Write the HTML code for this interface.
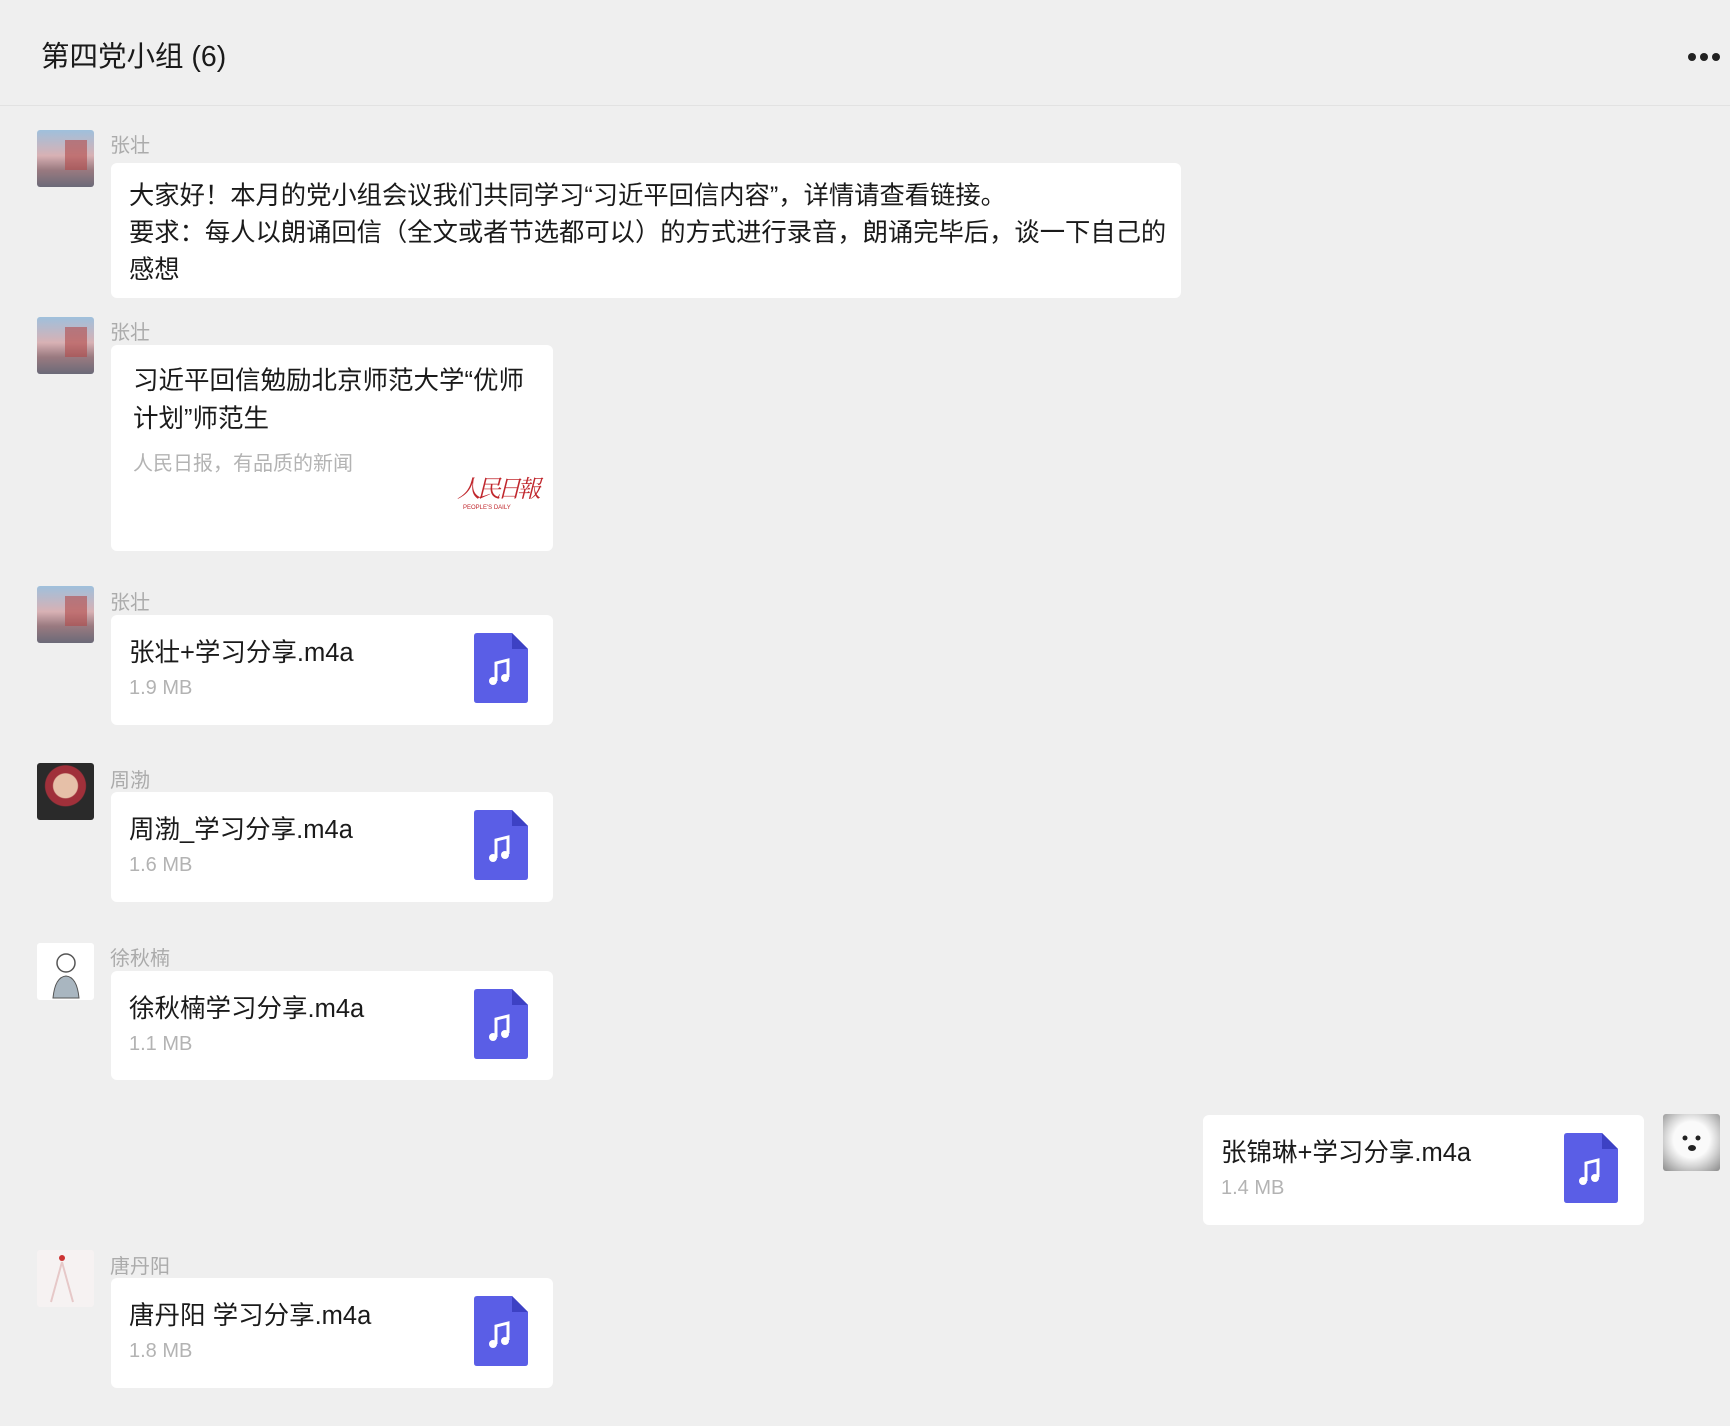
<!DOCTYPE html>
<html><head><meta charset="utf-8"><style>
*{margin:0;padding:0;box-sizing:border-box}
body{width:1730px;height:1426px;background:#efefef;font-family:"Liberation Sans","Noto Sans CJK SC",sans-serif;position:relative;overflow:hidden;color:#1a1a1a}
.hdr{position:absolute;left:0;top:0;width:1730px;height:106px;border-bottom:1px solid #e2e2e2}
.title{position:absolute;left:41px;top:34px;font-size:28.5px}
.dots{position:absolute;left:1688px;top:48px}
.dots i{display:inline-block;width:8px;height:8px;border-radius:50%;background:#222;margin-right:4px}
.av{position:absolute;left:37px;width:57px;height:57px;border-radius:3px;overflow:hidden}
.a1{background:linear-gradient(180deg,#9fc0dc 0%,#d8b1b4 45%,#9a7a80 70%,#6b6a78 100%)}
.a1:after{content:"";position:absolute;left:28px;top:10px;width:22px;height:30px;background:#b04a4a;opacity:.6}
.name{position:absolute;left:110px;font-size:20px;color:#ababab}
.b{position:absolute;background:#fff;border-radius:6px}
.txt{position:absolute;left:129px;font-size:25.3px;line-height:37px;white-space:nowrap}
.fn{position:absolute;left:18px;top:17px;font-size:25.5px;white-space:nowrap}
.sz{position:absolute;left:18px;top:62px;font-size:20px;color:#b3b3b3}
.ic{position:absolute;width:54px;height:70px}
</style></head><body>
<div class="hdr"><div class="title">第四党小组 (6)</div><div class="dots"><i></i><i></i><i></i></div></div>

<div class="av a1" style="top:130px"></div>
<div class="name" style="top:129px">张壮</div>
<div class="b" style="left:111px;top:163px;width:1070px;height:135px"></div>
<div class="txt" style="top:178px">大家好！本月的党小组会议我们共同学习“习近平回信内容”，详情请查看链接。<br>要求：每人以朗诵回信（全文或者节选都可以）的方式进行录音，朗诵完毕后，谈一下自己的<br>感想</div>

<div class="av a1" style="top:317px"></div>
<div class="name" style="top:316px">张壮</div>
<div class="b" style="left:111px;top:345px;width:442px;height:206px">
<div style="position:absolute;left:22px;top:17px;font-size:25.5px;line-height:38px">习近平回信勉励北京师范大学“优师<br>计划”师范生</div>
<div style="position:absolute;left:22px;top:102px;font-size:20px;color:#b3b3b3">人民日报，有品质的新闻</div>
<div style="position:absolute;left:346px;top:124px;font-size:24px;color:#c0272d;font-style:italic;font-family:'Noto Serif CJK SC',serif;white-space:nowrap;letter-spacing:-4px">人民日報</div>
<div style="position:absolute;left:352px;top:160px;font-size:6px;color:#c0272d;white-space:nowrap">PEOPLE'S DAILY</div>
</div>

<div class="av a1" style="top:586px"></div>
<div class="name" style="top:586px">张壮</div>
<div class="b" style="left:111px;top:615px;width:442px;height:110px"><div class="fn">张壮+学习分享.m4a</div><div class="sz">1.9 MB</div>
<svg class="ic" style="left:363px;top:18px" viewBox="0 0 54 70"><path d="M3 0H38L54 16V67Q54 70 51 70H3Q0 70 0 67V3Q0 0 3 0Z" fill="#5a5ee6"/><path d="M38 0V16H54Z" fill="#3d41c4"/><path d="M22 48V30L34 27V44" stroke="#fff" stroke-width="3" fill="none"/><circle cx="19" cy="48" r="4" fill="#fff"/><circle cx="31" cy="45" r="4" fill="#fff"/></svg></div>

<div class="av" style="top:763px;background:radial-gradient(circle at 50% 40%,#e6c0a8 0 12px,#a0303a 13px 20px,#2a2a2a 21px)"></div>
<div class="name" style="top:764px">周渤</div>
<div class="b" style="left:111px;top:792px;width:442px;height:110px"><div class="fn">周渤_学习分享.m4a</div><div class="sz">1.6 MB</div>
<svg class="ic" style="left:363px;top:18px" viewBox="0 0 54 70"><path d="M3 0H38L54 16V67Q54 70 51 70H3Q0 70 0 67V3Q0 0 3 0Z" fill="#5a5ee6"/><path d="M38 0V16H54Z" fill="#3d41c4"/><path d="M22 48V30L34 27V44" stroke="#fff" stroke-width="3" fill="none"/><circle cx="19" cy="48" r="4" fill="#fff"/><circle cx="31" cy="45" r="4" fill="#fff"/></svg></div>

<div class="av" style="top:943px;background:#fff"><svg width="57" height="57"><circle cx="29" cy="20" r="9" fill="none" stroke="#555" stroke-width="1.5"/><path d="M16 55Q18 34 29 33Q40 34 42 55Z" fill="#a9b6c0" stroke="#555"/></svg></div>
<div class="name" style="top:942px">徐秋楠</div>
<div class="b" style="left:111px;top:971px;width:442px;height:109px"><div class="fn">徐秋楠学习分享.m4a</div><div class="sz">1.1 MB</div>
<svg class="ic" style="left:363px;top:18px" viewBox="0 0 54 70"><path d="M3 0H38L54 16V67Q54 70 51 70H3Q0 70 0 67V3Q0 0 3 0Z" fill="#5a5ee6"/><path d="M38 0V16H54Z" fill="#3d41c4"/><path d="M22 48V30L34 27V44" stroke="#fff" stroke-width="3" fill="none"/><circle cx="19" cy="48" r="4" fill="#fff"/><circle cx="31" cy="45" r="4" fill="#fff"/></svg></div>

<div class="b" style="left:1203px;top:1115px;width:441px;height:110px"><div class="fn">张锦琳+学习分享.m4a</div><div class="sz">1.4 MB</div>
<svg class="ic" style="left:361px;top:18px" viewBox="0 0 54 70"><path d="M3 0H38L54 16V67Q54 70 51 70H3Q0 70 0 67V3Q0 0 3 0Z" fill="#5a5ee6"/><path d="M38 0V16H54Z" fill="#3d41c4"/><path d="M22 48V30L34 27V44" stroke="#fff" stroke-width="3" fill="none"/><circle cx="19" cy="48" r="4" fill="#fff"/><circle cx="31" cy="45" r="4" fill="#fff"/></svg></div>
<div class="av" style="left:1663px;top:1114px;background:radial-gradient(circle at 50% 45%,#fafafa 0 18px,#d8d8d8 26px,#8a8a8a)"><svg width="57" height="57"><circle cx="22" cy="24" r="2.5" fill="#222"/><circle cx="35" cy="24" r="2.5" fill="#222"/><ellipse cx="29" cy="34" rx="4" ry="3" fill="#222"/></svg></div>

<div class="av" style="top:1250px;background:#f6f2f2"><svg width="57" height="57"><circle cx="25" cy="8" r="3" fill="#c33"/><path d="M25 12L14 52M25 12L36 52" stroke="#e6c8c8" stroke-width="2"/></svg></div>
<div class="name" style="top:1250px">唐丹阳</div>
<div class="b" style="left:111px;top:1278px;width:442px;height:110px"><div class="fn">唐丹阳 学习分享.m4a</div><div class="sz">1.8 MB</div>
<svg class="ic" style="left:363px;top:18px" viewBox="0 0 54 70"><path d="M3 0H38L54 16V67Q54 70 51 70H3Q0 70 0 67V3Q0 0 3 0Z" fill="#5a5ee6"/><path d="M38 0V16H54Z" fill="#3d41c4"/><path d="M22 48V30L34 27V44" stroke="#fff" stroke-width="3" fill="none"/><circle cx="19" cy="48" r="4" fill="#fff"/><circle cx="31" cy="45" r="4" fill="#fff"/></svg></div>
</body></html>
